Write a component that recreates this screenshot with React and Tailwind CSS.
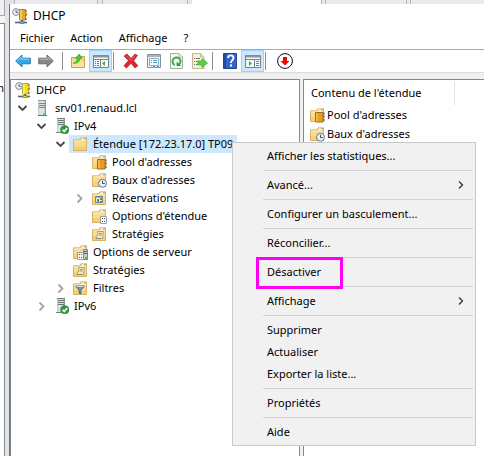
import React from "react";

function Svg({ children, className = "h-4 w-4" }) {
  return (
    <svg viewBox="0 0 16 16" className={"block shrink-0 " + className} aria-hidden="true">
      {children}
    </svg>
  );
}

function Folder() {
  return (
    <>
      <path d="M1 3.500h6.500l1-2h6.500v13h-14z" fill="#f0c873" />
      <path d="M1.500 14.500v-10.500h6.500l1-2h5.500v12.500z" fill="#f8dc92" stroke="#d9b362" />
      <path d="M9.500 3h3" stroke="#fff" />
      <path d="M12 3h2" stroke="#4aa3dc" />
      <path d="M2 5h6l1-1h5" fill="none" stroke="#fdf0c6" />
      <path d="M2 10h12v4h-12z" fill="#f4d07e" />
    </>
  );
}

function Server() {
  return (
    <>
      <path d="M4 .5h8v15h-8z" fill="#c3cacc" />
      <path d="M5 1h5v14h-5z" fill="#dde2e3" />
      <path d="M5 3.500h6M5 5.500h6M5 7.500h6" stroke="#7b868b" />
      <path d="M11.500 1v14" stroke="#8c979b" />
      <path d="M4 .5h8" stroke="#8c979b" />
      <path d="M4 15.500h9" stroke="#687276" />
      <path d="M9 13h2v2h-2z" fill="#4ee63a" />
    </>
  );
}

function ServerOk() {
  return (
    <>
      <path d="M4 0h8v15h-8z" fill="#c3cacc" />
      <path d="M5 1h5v13h-5z" fill="#dde2e3" />
      <path d="M5 2.500h6M5 4.500h6M5 6.500h6" stroke="#67747a" />
      <path d="M11.500 0v10" stroke="#8c979b" />
      <path d="M4 .5h8M3 14.500h7" stroke="#737e83" />
      <circle cx="11.800" cy="11.800" r="4.100" fill="#269b38" stroke="#147b28" strokeWidth=".6" />
      <path d="M9.500 11.800l1.700 1.800 3-3.600" fill="none" stroke="#fff" strokeWidth="1.500" />
    </>
  );
}

function Dhcp({ yellow }) {
  return (
    <>
      <path d="M6 1.500h7.500v3l1.500 1-1.500 1.500v5h-6v-5z" fill={yellow ? "#f5dc16" : "#e8a62e"} stroke={yellow ? "#b29a10" : "#a36a18"} strokeWidth=".8" />
      <path d="M9 2v10" stroke={yellow ? "#fff56a" : "#ffd36e"} strokeWidth="1.500" />
      <path d="M14 2v2M14 6v2M14 10v2" stroke="#805018" />
      <path d="M10 12v2" stroke="#606870" strokeWidth="2" />
      <path d="M3 14.500h12" stroke="#4b6580" strokeWidth="1.600" />
      <path d="M8 13.500h4v2h-4z" fill={yellow ? "#f5dc16" : "#8fa7bb"} stroke="#475969" strokeWidth=".5" />
      <circle cx="4" cy="4" r="3.400" fill="#eef4f6" stroke="#7e8b92" />
      <path d="M4 2v2.300h2" fill="none" stroke="#44515b" strokeWidth=".9" />
    </>
  );
}

function Glyph({ name }) {
  switch (name) {
    case "app":
      return <Svg><Dhcp /></Svg>;
    case "dhcp":
      return <Svg><Dhcp yellow /></Svg>;
    case "server":
      return <Svg><Server /></Svg>;
    case "serverOk":
      return <Svg><ServerOk /></Svg>;
    case "folder":
      return <Svg><Folder /></Svg>;
    case "pool":
      return (
        <Svg>
          <Folder />
          <path d="M6.500 5.500h7.500v9.500h-7.500z" fill="#e79b25" stroke="#a46a17" />
          <path d="M8 6v8.500" stroke="#ffd06b" />
          <path d="M15 5.500v2" stroke="#268ec0" strokeWidth="1.500" />
          <path d="M15 8.500v2" stroke="#d13b20" strokeWidth="1.500" />
          <path d="M15 12v2" stroke="#4f9b2c" strokeWidth="1.500" />
        </Svg>
      );
    case "lease":
      return (
        <Svg>
          <Folder />
          <circle cx="11.500" cy="11.300" r="4" fill="#e9f1f5" stroke="#647983" />
          <path d="M11.500 8.800v2.700h2.300" fill="none" stroke="#344d61" />
        </Svg>
      );
    case "reservation":
      return (
        <Svg>
          <Folder />
          <path d="M4.500 6.500h7v6h-7z" fill="#e8eeee" stroke="#7f8b8c" />
          <path d="M4 7h8" stroke="#66798c" />
          <path d="M6 9h2v3h-2zM9 8h2v2h-2z" fill="#3c9f54" />
          <path d="M9 11h2v1h-2z" fill="#3978a9" />
        </Svg>
      );
    case "options":
      return (
        <Svg>
          <Folder />
          <path d="M9.500 8.500h6v7h-6z" fill="#fafafa" stroke="#9ca0a3" />
          <path d="M11 10.500h1M13 10.500h1M11 13.500h1M13 13.500h1" stroke="#45515b" />
        </Svg>
      );
    case "serverOptions":
      return (
        <Svg>
          <Folder />
          <path d="M5.500 8.500h6v7h-6z" fill="#fafafa" stroke="#9ca0a3" />
          <path d="M7 10.500h1M9 10.500h1M7 13.500h1M9 13.500h1" stroke="#45515b" />
          <path d="M11.500 5.500h4v10h-4z" fill="#c4ced1" stroke="#7b878b" />
          <path d="M12 7.500h3M12 9.500h3" stroke="#566267" />
          <path d="M13 13h2v2h-2z" fill="#36d035" />
        </Svg>
      );
    case "policy":
      return (
        <Svg>
          <Folder />
          <path d="M6.500 5.500h6l-1 7h-6.500l1-3h1z" fill="#f4e8c4" stroke="#a0957a" strokeWidth=".8" />
          <path d="M8 7.500h3M8 9h2.500M4.500 12.500h5" stroke="#8c8468" strokeWidth=".8" />
        </Svg>
      );
    case "filter":
      return (
        <Svg>
          <Folder />
          <path d="M3.500 6h9l-3.500 4v4l-2-1v-3z" fill="#6d93ad" stroke="#426276" strokeWidth=".8" />
          <path d="M4.500 6.500h7" stroke="#c9dde8" />
        </Svg>
      );
    case "back":
      return (
        <Svg>
          <path d="M.7 8l6.300-6v3.200h8.300v5.600h-8.300v3.200z" fill="#35a7e9" stroke="#2470a9" strokeWidth=".9" />
          <path d="M2.500 7.500l3.700-3.500v2.200h8" fill="none" stroke="#8bd6fb" />
        </Svg>
      );
    case "forward":
      return (
        <Svg>
          <path d="M15.300 8l-6.300-6v3.200h-8.300v5.600h8.300v3.200z" fill="#888" stroke="#686868" strokeWidth=".9" />
          <path d="M1.500 6.200h8.500v-2l3 3" fill="none" stroke="#bbb" />
        </Svg>
      );
    case "up":
      return (
        <Svg>
          <path d="M1.500 14.500v-10h5l1-1h7v11z" fill="#f6d681" stroke="#c7a252" />
          <path d="M2 8h12v6h-12z" fill="#fae3a0" />
          <path d="M3 10c3 0 4-2 4.500-5l-2 .300 3.800-4.300 2.700 4.500-2-.3c-.5 4-3 6-7 4.800z" fill="#45cf35" stroke="#249526" strokeWidth=".6" />
        </Svg>
      );
    case "treeView":
      return (
        <Svg>
          <path d="M.5 2.500h15v12h-15z" fill="#f6f8f9" stroke="#77838b" />
          <path d="M1 3.500h14" stroke="#8a969e" strokeWidth="2" />
          <path d="M1 6.500h14M7.500 6v8" stroke="#77838b" />
          <path d="M2 8.500h1M4 8.500h2M2 10.500h1M4 10.500h2M2 12.500h1M4 12.500h2" stroke="#4d7896" />
          <path d="M12 8v5l-3-2.500z" fill="#3eb52f" />
        </Svg>
      );
    case "actionView":
      return (
        <Svg>
          <path d="M.5 2.500h15v12h-15z" fill="#f6f8f9" stroke="#77838b" />
          <path d="M1 3.500h14" stroke="#8a969e" strokeWidth="2" />
          <path d="M1 6.500h14M9.500 6v8" stroke="#77838b" />
          <path d="M11 8.500h3M11 10.500h3M11 12.500h3" stroke="#4a8fc0" />
          <path d="M4 8v5l3-2.500z" fill="#3eb52f" />
        </Svg>
      );
    case "delete":
      return (
        <Svg>
          <path d="M1 3l3-2 4 4.500 4-4.500 2.500 1.500-4 5.300 4.500 5-3 2.200-4-4.700-4.500 4.700-2.500-2.200 4.500-5.300z" fill="#e2222d" stroke="#ae202a" strokeWidth=".7" />
          <path d="M3 2.500l5 5 4-5" fill="none" stroke="#f46467" />
        </Svg>
      );
    case "properties":
      return (
        <Svg>
          <path d="M1.500 1.500h13v13h-13z" fill="#f0f3f5" stroke="#879198" />
          <path d="M2 3h12" stroke="#aab3b9" strokeWidth="2" />
          <path d="M3.500 5.500h9v7h-9z" fill="#fff" stroke="#9aa7b0" />
          <path d="M5 7.500h1M7 7.500h4M5 9.500h1M7 9.500h4" stroke="#3c9cc7" />
          <path d="M7 13.500h2M11 13.500h2" stroke="#36a4cf" />
        </Svg>
      );
    case "refresh":
      return (
        <Svg>
          <path d="M1.500.5h8.500l3.500 3.500v11.500h-12z" fill="#f7f7f5" stroke="#aaa" />
          <path d="M10 1v3h3" fill="none" stroke="#bbb" />
          <path d="M5.700 12a4 4 0 1 1 4.600-.7" fill="none" stroke="#36b23c" strokeWidth="2" />
          <path d="M7.700 8.500v4.500h4.500z" fill="#279a30" />
        </Svg>
      );
    case "export":
      return (
        <Svg>
          <path d="M.5.500h8l3.500 3.500v11.500h-11.500z" fill="#fbf1cc" stroke="#c1b68c" />
          <path d="M8.500 1v3h3" fill="none" stroke="#c1b68c" />
          <path d="M2 5.500h1M4 5.500h4M2 8.500h1M4 8.500h4M2 11.500h1M4 11.500h4" stroke="#69758a" />
          <path d="M6 8h4v-2.500l5.500 4.500-5.500 4.500v-2.500h-4z" fill="#5bd049" stroke="#36a82e" strokeWidth=".7" />
        </Svg>
      );
    case "help":
      return (
        <Svg>
          <path d="M1.500.5h13v15h-13z" fill="#3566c4" stroke="#24458f" />
          <path d="M3 1v14" stroke="#274c9e" strokeWidth="2" />
          <path d="M6 5c0-3.500 5.500-3.500 5.500 0 0 2.300-2.500 2.200-2.500 5" fill="none" stroke="#fff" strokeWidth="1.800" />
          <path d="M8 11.500h2v2h-2z" fill="#fff" />
        </Svg>
      );
    case "deactivate":
      return (
        <Svg>
          <circle cx="8" cy="8" r="7.400" fill="#fff" stroke="#111" />
          <path d="M6 4h4v4h2.500l-4.500 4.500-4.500-4.500h2.500z" fill="#fa0000" />
        </Svg>
      );
    default:
      return null;
  }
}

function Chevron({ open }) {
  return (
    <Svg>
      {open ? (
        <path d="M3.500 6l4 4 4-4" fill="none" stroke="#484848" strokeWidth="1.800" />
      ) : (
        <path d="M5.500 4.500l4 4-4 4" fill="none" stroke="#a4a4a4" strokeWidth="1.800" />
      )}
    </Svg>
  );
}

const INDENT = ["pl-1", "pl-1", "pl-[23px]", "pl-[42px]", "pl-[61px]"];

const TREE = [
  { level: 0, icon: "dhcp", label: "DHCP" },
  { level: 1, icon: "server", label: "srv01.renaud.lcl", open: true },
  { level: 2, icon: "serverOk", label: "IPv4", open: true },
  { level: 3, icon: "folder", label: "Étendue [172.23.17.0] TP09", open: true, selected: true },
  { level: 4, icon: "pool", label: "Pool d'adresses" },
  { level: 4, icon: "lease", label: "Baux d'adresses" },
  { level: 4, icon: "reservation", label: "Réservations", open: false },
  { level: 4, icon: "options", label: "Options d'étendue" },
  { level: 4, icon: "policy", label: "Stratégies" },
  { level: 3, icon: "serverOptions", label: "Options de serveur" },
  { level: 3, icon: "policy", label: "Stratégies" },
  { level: 3, icon: "filter", label: "Filtres", open: false },
  { level: 2, icon: "serverOk", label: "IPv6", open: false },
];

function TreeRow({ level, icon, label, open, selected }) {
  return (
    <li role="treeitem" aria-level={level + 1} aria-expanded={open} aria-selected={!!selected} className={"flex h-[18px] items-center " + INDENT[level]}>
      {level > 0 && (
        <span className="w-4 shrink-0">{open !== undefined && <Chevron open={open} />}</span>
      )}
      <span className={"flex h-full items-center gap-[5px] whitespace-nowrap pr-1 " + (level > 0 ? "pl-[3px] " : "") + (selected ? "bg-[#cce8ff]" : "")}>
        <Glyph name={icon} />
        {label}
      </span>
    </li>
  );
}

function Tool({ icon, label, active }) {
  return (
    <button type="button" aria-label={label} className={"flex h-[22px] w-[23px] shrink-0 items-center justify-center " + (active ? "border border-[#99d1ff] bg-[#cce8ff]" : "")}>
      <Glyph name={icon} />
    </button>
  );
}

function Divider() {
  return <span className="mx-px h-[18px] w-px shrink-0 bg-[#8d8d8d]" />;
}

const MENU = [
  [{ label: "Afficher les statistiques..." }],
  [{ label: "Avancé...", sub: true }],
  [{ label: "Configurer un basculement..." }],
  [{ label: "Réconcilier..." }],
  [{ label: "Désactiver", marked: true }],
  [{ label: "Affichage", sub: true }],
  [{ label: "Supprimer" }, { label: "Actualiser" }, { label: "Exporter la liste..." }],
  [{ label: "Propriétés" }],
  [{ label: "Aide" }],
];

function ContextMenu() {
  return (
    <div role="menu" className="absolute left-[232px] top-[142px] w-[244px] border border-[#c8c8c8] bg-[#f1f1f1] py-0.5">
      {MENU.map((group, i) => (
        <div key={i}>
          {i > 0 && <div role="separator" className="my-[3px] ml-[30px] mr-0.5 h-px bg-[#d3d3d3]" />}
          {group.map((item) => (
            <button key={item.label} type="button" role="menuitem" className="relative flex h-[22px] w-full items-center justify-between pl-[34px] pr-2 text-left">
              {item.label}
              {item.sub && (
                <svg viewBox="0 0 10 10" className="mr-px h-2.5 w-2.5" aria-hidden="true">
                  <path d="M3 1.500l3.500 3.500-3.500 3.500" fill="none" stroke="#333" strokeWidth="1.300" />
                </svg>
              )}
              {item.marked && <span className="absolute -top-1 left-[23px] h-8 w-[87px] border-3 border-[#ff00f5]" />}
            </button>
          ))}
        </div>
      ))}
    </div>
  );
}

export default function App() {
  return (
    <div className="relative flex min-h-screen overflow-hidden bg-[#e2e3e6] font-['Noto_Sans','Open_Sans',sans-serif] text-[11px] leading-4 text-black">
      <div className="mr-1 flex w-[5px] shrink-0 flex-col overflow-hidden">
        <div className="h-4 border-b border-r border-[#a5a6ab] bg-[#f0f0f0]" />
        <div className="h-[7px] bg-[#f4f4f4]" />
        <div className="flex flex-1 justify-end overflow-hidden border-r border-t border-[#858991] bg-white pt-14">m</div>
      </div>

      <div className="flex min-w-0 flex-1 flex-col">
        <div className="flex h-1 shrink-0 bg-[#e9eaec]">
          <span className="w-[5px] bg-[#e2e3e6]" />
          <span className="w-[84px] border-x border-[#b4b5b9]" />
          <span className="w-1 bg-[#e2e3e6]" />
          <span className="w-[86px] border-x border-[#b4b5b9]" />
          <span className="w-1 bg-[#e2e3e6]" />
          <span className="w-[129px] bg-white" />
          <span className="w-[5px] border-x border-[#b4b5b9]" />
          <span className="w-[80px]" />
          <span className="w-[5px] border-x border-[#b4b5b9]" />
        </div>

        <main className="flex flex-1 flex-col border-l border-[#707176] bg-white">
          <header className="flex h-[23px] items-center gap-[5px] pl-0.5">
            <Glyph name="app" />
            <h1 className="text-[12px]">DHCP</h1>
          </header>

          <nav className="flex h-[23px] items-center gap-4 border-b border-[#a9a9b0] pl-[10px]">
            <button type="button">Fichier</button>
            <button type="button">Action</button>
            <button type="button">Affichage</button>
            <button type="button">?</button>
          </nav>

          <div className="flex h-[23px] items-center border-b border-[#dcdcdc] pl-px">
            <Tool icon="back" label="Précédent" />
            <Tool icon="forward" label="Suivant" />
            <span className="w-1" />
            <Divider />
            <span className="w-0.5" />
            <Tool icon="up" label="Dossier parent" />
            <Tool icon="treeView" label="Arborescence" active />
            <Divider />
            <span className="w-1" />
            <Tool icon="delete" label="Supprimer" />
            <Tool icon="properties" label="Propriétés" />
            <Tool icon="refresh" label="Actualiser" />
            <Tool icon="export" label="Exporter la liste" />
            <Divider />
            <span className="w-1" />
            <Tool icon="help" label="Aide" />
            <Tool icon="actionView" label="Volet Actions" active />
            <Divider />
            <span className="w-1.5" />
            <Tool icon="deactivate" label="Désactiver" />
          </div>

          <div className="flex flex-1 gap-[3px] bg-[#f0f0f0] pt-1.5">
            <ul role="tree" className="w-[290px] shrink-0 border border-b-0 border-[#828790] bg-white pt-px">
              {TREE.map((row, i) => (
                <TreeRow key={i} {...row} />
              ))}
            </ul>
            <section className="min-w-0 flex-1 border-l border-t border-[#828790] bg-white pt-px">
              <h2 className="flex h-6 w-[151px] items-center whitespace-nowrap border-r border-[#e0e0e0] pl-[7px]">Contenu de l'étendue</h2>
              <ul>
                <li className="flex h-[19px] items-center gap-0.5 whitespace-nowrap pl-[5px]">
                  <Glyph name="pool" />
                  Pool d'adresses
                </li>
                <li className="flex h-[19px] items-center gap-0.5 whitespace-nowrap pl-[5px]">
                  <Glyph name="lease" />
                  Baux d'adresses
                </li>
              </ul>
            </section>
          </div>
        </main>
      </div>

      <ContextMenu />
    </div>
  );
}
